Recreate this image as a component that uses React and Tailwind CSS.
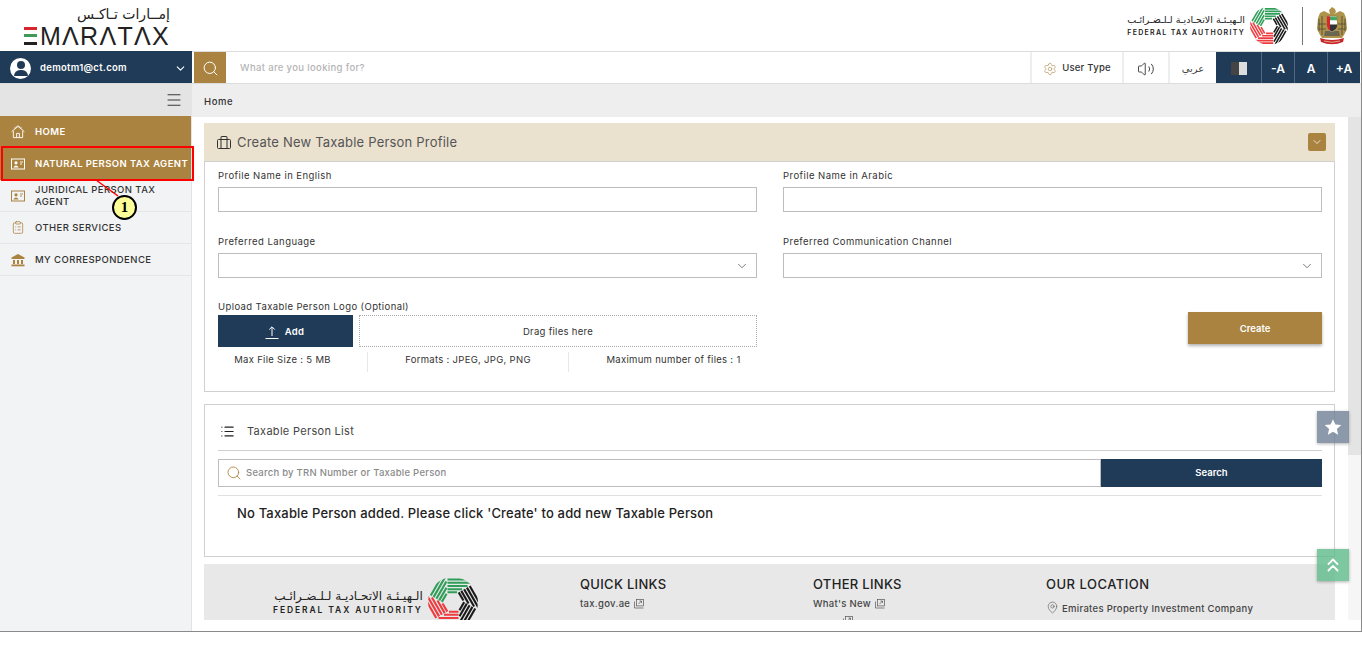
import React from "react";
import { Search, ChevronDown, Menu, ClipboardList, ChevronsUp, Settings, Volume2, List, MapPin } from "lucide-react";

const FONT = "font-['Inter','Open_Sans',sans-serif]";

function Ring({ size }) {
  const segs = [
    { r: -60, c: "#2f9e58" },
    { r: 0, c: "#2f9e58" },
    { r: 60, c: "#1a1a1a" },
    { r: 120, c: "#1a1a1a" },
    { r: 180, c: "#ee3b3f" },
    { r: 240, c: "#ee3b3f" },
  ];
  const lines = [
    { a: 45, x: 52 },
    { a: 38.5, x: 40.5 },
    { a: 32, x: 29 },
    { a: 25.5, x: 18 },
    { a: 19.5, x: 8 },
  ];
  const id = `ring-${size}`;
  return (
    <svg width={size} height={size} viewBox="0 0 100 100" className="shrink-0">
      <clipPath id={id}>
        <circle cx="50" cy="50" r="50" />
      </clipPath>
      <g clipPath={`url(#${id})`}>
        {segs.map((s, i) => (
          <g key={i} transform={`translate(50 50) rotate(${s.r})`} stroke={s.c} strokeWidth="4.2" fill="none">
            {lines.map((l) => (
              <line key={l.a} x1="-11" y1={-l.a} x2={l.x} y2={-l.a} />
            ))}
          </g>
        ))}
      </g>
    </svg>
  );
}

function FtaLogo({ size, ar, en, track }) {
  return (
    <div className="flex items-center gap-[5px]">
      <div className="flex flex-col items-end">
        <div className={`${ar} font-['DejaVu_Sans',sans-serif] text-[#222] leading-none whitespace-nowrap`} dir="rtl">الـهيـئـة الاتحـاديـة لـلـضـرائـب</div>
        <div className={`${en} ${track} font-['Inter',sans-serif] font-semibold text-[#222] leading-none mt-[4px] whitespace-nowrap`}>FEDERAL TAX AUTHORITY</div>
      </div>
      <Ring size={size} />
    </div>
  );
}

function Emblem() {
  return (
    <svg width="30" height="38" viewBox="0 0 30 38">
      <path d="M15 0 L18 2 L19 5 L17 7 L23 4 L27 6 L29 11 L30 22 L27 28 L25 31 L5 31 L3 28 L0 22 L1 11 L3 6 L7 4 L13 7 L12 3 Z" fill="#b0934a" />
      <path d="M2 12 L2 24 M5 9 L5 28 M25 9 L25 28 M28 12 L28 24" stroke="#5a5238" strokeWidth="1" />
      <path d="M1 17 H9 M21 17 H29 M2 22 H9 M21 22 H28" stroke="#4b4b3a" strokeWidth="0.8" />
      <path d="M8 24 L22 24 L23 29 L7 29 Z" fill="#6a6650" />
      <path d="M10 9 L20 9 L20 19 Q20 23 15 25 Q10 23 10 19 Z" fill="#f4f1e6" stroke="#8a7a3c" strokeWidth="0.6" />
      <rect x="13" y="9.5" width="7" height="4" fill="#49a766" />
      <rect x="13" y="13.5" width="7" height="4" fill="#fff" />
      <path d="M13 17.5 H20 V19 Q20 22 15 24.5 L13 23.6 Z" fill="#333" />
      <path d="M10 9.3 H13 V23.6 Q10 22 10 19 Z" fill="#d8262c" />
      <path d="M3 31 Q15 35 27 31 L26 35 Q15 39.5 4 35 Z" fill="#c8262c" />
      <path d="M7 34 Q15 36.5 23 34" stroke="#f0d9a8" strokeWidth="0.7" fill="none" />
    </svg>
  );
}

function HomeIcon({ className }) {
  return (
    <svg width="15" height="14" viewBox="0 0 15 14" fill="none" stroke="currentColor" strokeWidth="1" className={className}>
      <path d="M0.7 6.6 L7.5 1 L14.3 6.6" />
      <path d="M2.5 6 V13 H12.5 V6" />
      <path d="M6 13 V8.5 H9 V13" />
      <path d="M3 3 L7.5 0.3 L12 3" strokeWidth="0.6" />
    </svg>
  );
}

function CardIcon({ className }) {
  return (
    <svg width="14" height="14" viewBox="0 0 14 14" className={className}>
      <rect x="0.5" y="2" width="13" height="10" fill="none" stroke="currentColor" strokeWidth="1" />
      <circle cx="5" cy="5.8" r="1.6" fill="currentColor" />
      <path d="M2.3 10.5 Q5 6.5 7.7 10.5 Z" fill="currentColor" />
      <path d="M9 5 H12 M9 7 H11" stroke="currentColor" strokeWidth="0.9" />
    </svg>
  );
}

function ClipIcon({ className }) {
  return <ClipboardList size={15} strokeWidth={1.3} className={className} />;
}

function BankIcon({ className }) {
  return (
    <svg width="14" height="14" viewBox="0 0 14 14" className={className}>
      <path d="M7 1 L13.5 4.5 V6 H0.5 V4.5 Z" fill="currentColor" />
      <path d="M2 7 H4 V11 H2 Z M6 7 H8 V11 H6 Z M10 7 H12 V11 H10 Z" fill="currentColor" />
      <rect x="0.5" y="11.5" width="13" height="1.8" fill="currentColor" />
    </svg>
  );
}

function BagIcon() {
  return (
    <svg width="14" height="13" viewBox="0 0 14 13" fill="none" stroke="#333" strokeWidth="1">
      <rect x="0.5" y="3.5" width="13" height="9" rx="1" />
      <path d="M4 12.5 V1 Q4 0.5 4.5 0.5 H9.5 Q10 0.5 10 1 V12.5" />
    </svg>
  );
}

function LinkIcon() {
  return (
    <svg width="10" height="10" viewBox="0 0 10 10" fill="none" stroke="#555" strokeWidth="0.7" className="shrink-0">
      <rect x="2.4" y="0.5" width="7" height="6.4" />
      <path d="M0.5 2.5 V9 H9.5" />
      <path d="M4.5 5 L7.5 2 M5.5 2 H7.5 V4" />
    </svg>
  );
}

function UploadIcon() {
  return (
    <svg width="14" height="13" viewBox="0 0 14 13" fill="none" stroke="white" strokeWidth="1">
      <path d="M7 10 V1 M4.2 3.6 L7 0.8 L9.8 3.6" />
      <path d="M0.5 12.5 H13.5" />
    </svg>
  );
}

function Field({ label, select }) {
  return (
    <div className="flex-1 min-w-0">
      <div className="text-[9.5px] leading-[12px] text-[#333] tracking-[0.45px] mb-[5px]">{label}</div>
      <div className="h-[25px] border border-[#bdbdbd] bg-white flex items-center justify-end pr-[7px]">
        {select && <ChevronDown size={14} strokeWidth={1.2} className="text-[#444]" />}
      </div>
    </div>
  );
}

function NavItem({ icon: I, active, children }) {
  return (
    <div className={`h-[32px] flex items-center pl-[11px] border-b ${active ? "bg-[#ab8340] border-[#ab8340] text-white" : "border-[#e6e6e6] text-[#333]"}`}>
      <div className="w-[14px] flex justify-center shrink-0">
        <I className={active ? "text-white" : "text-[#ab8340]"} />
      </div>
      <span className={`ml-[10px] text-[9.5px] leading-[12px] tracking-[0.42px] whitespace-pre ${active ? "font-semibold" : "font-medium"}`}>{children}</span>
    </div>
  );
}

export default function App() {
  return (
    <div className={`${FONT} h-[648px] bg-white overflow-hidden`}>
      <div className="relative h-[632px] flex flex-col border-b border-r border-[#8a8a8a] overflow-hidden">
        {/* logo row */}
        <header className="h-[51px] flex items-center justify-between shrink-0 bg-white">
          <div className="ml-[24px] w-[146px] flex flex-col items-end">
            <div className="text-[14px] leading-[17px] font-['DejaVu_Sans',sans-serif] text-[#222]" dir="rtl">إمــارات تـاكـس</div>
            <div className="flex items-center h-[20px] mt-[3px] w-full justify-between">
              <div className="flex flex-col justify-between h-[18px] w-[13px] shrink-0">
                <div className="h-[3px] bg-[#d8262c]" />
                <div className="h-[3px] bg-[#3f9a5a]" />
                <div className="h-[3px] bg-[#222]" />
              </div>
              <span className="text-[25px] leading-[20px] tracking-[1.3px] text-[#222] font-['Liberation_Sans',sans-serif]">ΜΛRΛTΛX</span>
            </div>
          </div>
          <div className="flex items-center mr-[14px]">
            <FtaLogo size={38} ar="text-[9.5px]" en="text-[7px]" track="tracking-[1.3px]" />
            <div className="w-px h-[38px] bg-[#777] mx-[14px]" />
            <Emblem />
          </div>
        </header>

        {/* nav bar */}
        <div className="h-[33px] flex shrink-0 border-t border-b border-[#dcdcdc] bg-white pr-px">
          <div className="w-[192px] h-[32px] -mt-px pt-[2px] bg-[#1f3b57] flex items-center pl-[10px] pr-[5px] text-white">
            <div className="w-[21px] h-[21px] rounded-full bg-white flex flex-col items-center justify-center overflow-hidden">
              <div className="w-[8px] h-[8px] rounded-full bg-[#1f3b57]" />
              <div className="w-[14px] h-[6px] rounded-t-full bg-[#1f3b57] mt-[1px]" />
            </div>
            <span className="ml-[9px] text-[9.5px] tracking-[0.3px] font-semibold flex-1">demotm1@ct.com</span>
            <ChevronDown size={13} strokeWidth={2} />
          </div>
          <div className="w-[32px] ml-[2px] pt-[2px] bg-[#ab8340] flex items-center justify-center text-white">
            <Search size={17} strokeWidth={1.4} />
          </div>
          <div className="flex-1 pl-[14px] pt-[2px] flex items-center text-[9.5px] tracking-[0.35px] font-medium text-[#b5b5b5]">What are you looking for?</div>
          <div className="w-[92px] pt-[2px] border-l-2 border-[#eee] flex items-center justify-center gap-[5px] text-[#333]">
            <Settings size={14} strokeWidth={1} className="text-[#ab8340]" />
            <span className="text-[9.5px] tracking-[0.25px] font-medium">User Type</span>
          </div>
          <div className="w-[46px] pt-[2px] border-l-2 border-[#eee] flex items-center justify-center text-[#333]">
            <Volume2 size={18} strokeWidth={1.2} />
          </div>
          <div className="w-[48px] pt-[2px] border-l-2 border-[#eee] flex items-center justify-center text-[10px] text-[#444] font-['DejaVu_Sans',sans-serif]">عربي</div>
          <div className="w-[45px] pt-[2px] bg-[#1f3b57] flex items-center justify-center">
            <div className="w-[16px] h-[13px] flex">
              <div className="w-1/2 bg-[#444]" />
              <div className="w-1/2 bg-[#ddd]" />
            </div>
          </div>
          {["-A", "A", "+A"].map((t) => (
            <div key={t} className="w-[33px] pt-[2px] border-l border-[#51677d] bg-[#1f3b57] text-white flex items-center justify-center text-[12px] font-semibold">{t}</div>
          ))}
        </div>

        {/* body */}
        <div className="flex-1 flex min-h-0">
          <aside className="w-[192px] shrink-0 bg-[#f2f3f5] border-r border-[#e3e3e3]">
            <div className="h-[32px] bg-[#e4e4e4] flex items-center justify-end pr-[8px]">
              <Menu size={18} strokeWidth={1.3} className="text-[#333]" />
            </div>
            <NavItem icon={HomeIcon} active>HOME</NavItem>
            <NavItem icon={CardIcon} active>NATURAL PERSON TAX AGENT</NavItem>
            <NavItem icon={CardIcon}>{"JURIDICAL PERSON TAX\nAGENT"}</NavItem>
            <NavItem icon={ClipIcon}>OTHER SERVICES</NavItem>
            <NavItem icon={BankIcon}>MY CORRESPONDENCE</NavItem>
          </aside>

          <div className="flex-1 min-w-0 flex flex-col">
            <div className="h-[33px] shrink-0 bg-[#eeeeee] flex items-center pl-[12px] pt-[4px] text-[9.5px] tracking-[0.6px] font-medium text-[#333]">Home</div>
            <div className="flex-1 min-h-0 flex overflow-hidden mb-[11px]">
              <main className="flex-1 min-w-0 pl-[12px] pr-[13px] pt-[6px] overflow-hidden">
                {/* create panel */}
                <section className="h-[269px] border border-[#d0d0d0] border-t-0">
                  <div className="h-[39px] bg-[#ebe1cf] border-b border-[#cfcfcf] flex items-center pl-[13px] pr-[9px] text-[#555] -mx-px">
                    <BagIcon />
                    <span className="ml-[6px] pt-[2px] text-[13px] tracking-[0.2px] flex-1">Create New Taxable Person Profile</span>
                    <div className="w-[18px] h-[18px] bg-[#ab8340] rounded-[2px] flex items-center justify-center text-white">
                      <ChevronDown size={12} strokeWidth={1.5} />
                    </div>
                  </div>
                  <div className="pl-[13px] pr-[12px] pt-[8px]">
                    <div className="flex gap-[26px]">
                      <Field label="Profile Name in English" />
                      <Field label="Profile Name in Arabic" />
                    </div>
                    <div className="flex gap-[26px] mt-[24px]">
                      <Field label="Preferred Language" select />
                      <Field label="Preferred Communication Channel" select />
                    </div>
                    <div className="flex mt-[23px]">
                      <div className="w-[539px]">
                        <div className="text-[9.5px] leading-[12px] text-[#333] tracking-[0.4px] mb-[2px]">Upload Taxable Person Logo (Optional)</div>
                        <div className="flex gap-[6px]">
                          <div className="w-[135px] h-[32px] pt-[3px] bg-[#1f3b57] text-white flex items-center justify-center gap-[6px] pr-[2px]">
                            <UploadIcon />
                            <span className="text-[9.5px] font-semibold tracking-[0.3px]">Add</span>
                          </div>
                          <div className="flex-1 h-[32px] pt-[3px] border border-dotted border-[#aaa] flex items-center justify-center text-[9.5px] text-[#333] tracking-[0.3px]">Drag files here</div>
                        </div>
                        <div className="flex mt-[5px] text-[9.5px] text-[#333] tracking-[0.3px]">
                          <div className="w-[150px] h-[20px] pt-[1px] pr-[20px] text-center border-r border-[#e2e8ee]">Max File Size : 5 MB</div>
                          <div className="w-[201px] h-[20px] pt-[1px] text-center border-r border-[#e2e8ee]">Formats : JPEG, JPG, PNG</div>
                          <div className="flex-1 pt-[1px] pl-[21px] text-center">Maximum number of files : 1</div>
                        </div>
                      </div>
                      <div className="flex-1 flex justify-end pt-[11px]">
                        <div className="w-[134px] h-[32px] pt-[2px] bg-[#ab8340] text-white flex items-center justify-center text-[9.5px] font-semibold shadow-[0_2px_3px_rgba(0,0,0,0.3)]">Create</div>
                      </div>
                    </div>
                  </div>
                </section>

                {/* list panel */}
                <section className="mt-[12px] h-[153px] border border-[#d0d0d0] pl-[13px] pr-[12px]">
                  <div className="h-[46px] pt-[8px] flex items-center pl-[2px] border-b border-[#cfcfcf] text-[#222]">
                    <List size={15} strokeWidth={1.8} />
                    <span className="ml-[12px] text-[11px] tracking-[0.3px] text-[#444]">Taxable Person List</span>
                  </div>
                  <div className="mt-[8px] flex h-[28px]">
                    <div className="flex-1 border border-[#bdbdbd] flex items-center pl-[7px] text-[9.5px] font-medium tracking-[0.25px] text-[#8a8a8a]">
                      <Search size={16} strokeWidth={1.3} className="text-[#ab8340]" />
                      <span className="ml-[4px]">Search by TRN Number or Taxable Person</span>
                    </div>
                    <div className="w-[221px] bg-[#1f3b57] text-white flex items-center justify-center text-[9.5px] font-semibold">Search</div>
                  </div>
                  <div className="mt-[8px] border-t border-[#e0e0e0] pt-[9px] pl-[19px] text-[13px] leading-[17px] tracking-[0.17px] font-medium text-[#222]">
                    No Taxable Person added. Please click 'Create' to add new Taxable Person
                  </div>
                </section>

                {/* footer */}
                <footer className="mt-[7px] h-[56px] bg-[#e8e8e8] flex overflow-hidden">
                  <div className="w-[376px] pl-[69px] pt-[13px]">
                    <FtaLogo size={50} ar="text-[12px]" en="text-[8.5px]" track="tracking-[1.9px]" />
                  </div>
                  <div className="w-[233px] pt-[13px]">
                    <div className="text-[13px] leading-[15px] font-medium text-[#222] tracking-[0.3px]">QUICK LINKS</div>
                    <div className="mt-[5px] flex items-center gap-[4px] text-[9.5px] tracking-[0.3px] font-medium text-[#444]">tax.gov.ae <LinkIcon /></div>
                  </div>
                  <div className="w-[233px] pt-[13px]">
                    <div className="text-[13px] leading-[15px] font-medium text-[#222] tracking-[0.3px]">OTHER LINKS</div>
                    <div className="mt-[5px] flex items-center gap-[4px] text-[9.5px] tracking-[0.3px] font-medium text-[#444]">What's New <LinkIcon /></div>
                    <div className="mt-[5px] ml-[30px]"><LinkIcon /></div>
                  </div>
                  <div className="flex-1 pt-[13px]">
                    <div className="text-[13px] leading-[15px] font-medium text-[#222] tracking-[0.5px]">OUR LOCATION</div>
                    <div className="mt-[10px] flex items-center gap-[3px] text-[9.5px] font-medium text-[#444] tracking-[0.3px]">
                      <MapPin size={13} strokeWidth={1} className="-mt-[3px]" /> Emirates Property Investment Company
                    </div>
                  </div>
                </footer>
              </main>
              {/* scrollbar */}
              <div className="w-[13px] shrink-0 bg-[#f6f6f6]">
                <div className="h-[338px] bg-[#e4e4e4]" />
              </div>
            </div>
          </div>
        </div>

        {/* floating buttons */}
        <div className="absolute left-[1317px] top-[411px] w-[32px] h-[32px] bg-[#6f8095]/80 shadow-[0_1px_3px_rgba(0,0,0,0.3)] flex items-center justify-center">
          <svg width="18" height="18" viewBox="0 0 24 24" fill="white"><path d="M12 1.5 L15.2 8.6 L23 9.4 L17.2 14.6 L18.9 22.3 L12 18.3 L5.1 22.3 L6.8 14.6 L1 9.4 L8.8 8.6 Z" /></svg>
        </div>
        <div className="absolute left-[1317px] top-[549px] w-[32px] h-[32px] bg-[#5cb98a]/80 shadow-[0_1px_3px_rgba(0,0,0,0.3)] flex items-center justify-center text-white">
          <ChevronsUp size={22} strokeWidth={2} />
        </div>

        {/* annotation */}
        <div className="absolute left-[1px] top-[146px] w-[193px] h-[35px] border-2 border-[#ff0000]" />
        <svg className="absolute left-[90px] top-[178px]" width="40" height="30">
          <line x1="6" y1="2" x2="28" y2="18" stroke="#ff0000" strokeWidth="1.5" />
        </svg>
        <div className="absolute left-[112px] top-[195px] w-[25px] h-[25px] rounded-full bg-[#ffff99] border-2 border-black flex items-center justify-center text-[15px] font-bold font-['Liberation_Serif',serif] text-black">1</div>
      </div>
    </div>
  );
}
